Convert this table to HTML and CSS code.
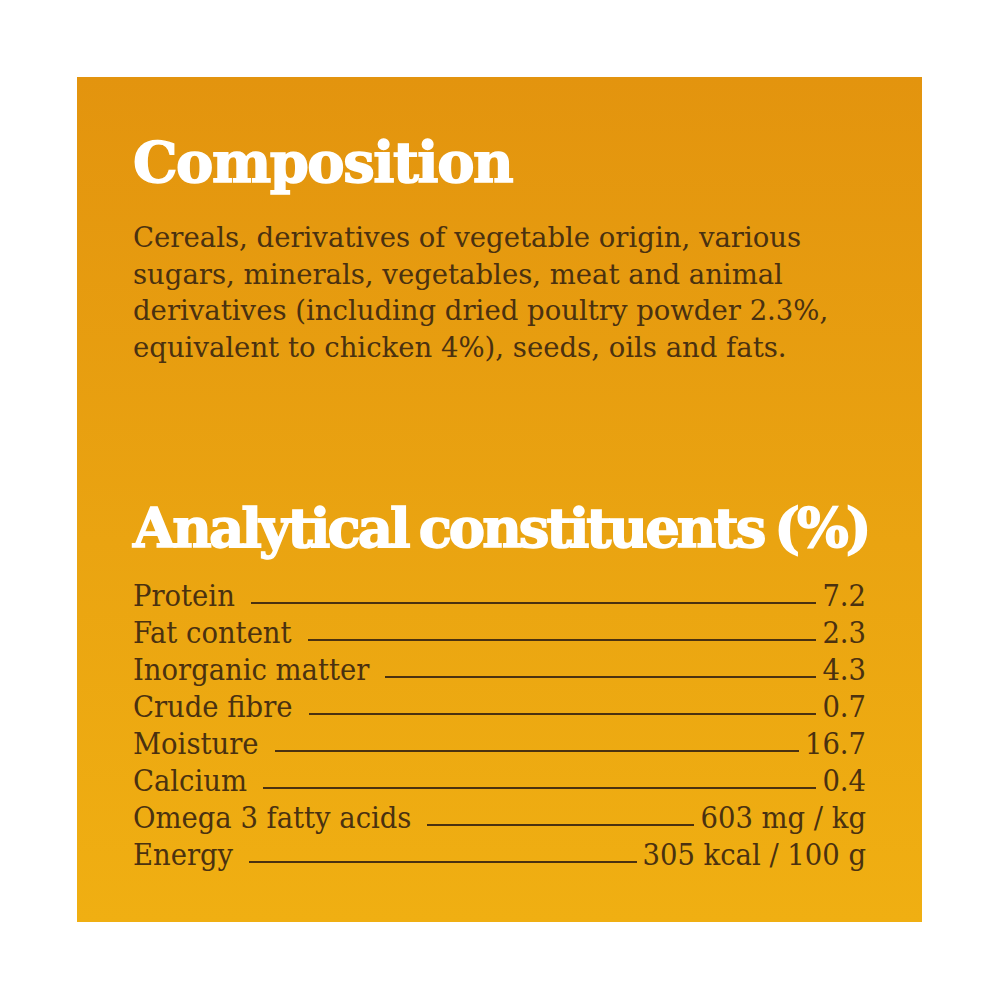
FILE: index.html
```html
<!DOCTYPE html>
<html>
<head>
<meta charset="utf-8">
<link rel="stylesheet" href="styles.css">
</head>
<body>
<div class="panel">
  <h1 class="title">Composition</h1>
  <p class="comp">Cereals, derivatives of vegetable origin, various sugars, minerals, vegetables, meat and animal derivatives (including dried poultry powder 2.3%, equivalent to chicken 4%), seeds, oils and fats.</p>
  <h2 class="title title2">Analytical constituents (%)</h2>
  <ul class="rows">
    <li class="row"><span class="lbl">Protein</span><span class="dots"></span><span class="val">7.2</span></li>
    <li class="row"><span class="lbl">Fat content</span><span class="dots"></span><span class="val">2.3</span></li>
    <li class="row"><span class="lbl">Inorganic matter</span><span class="dots"></span><span class="val">4.3</span></li>
    <li class="row"><span class="lbl">Crude fibre</span><span class="dots"></span><span class="val">0.7</span></li>
    <li class="row"><span class="lbl">Moisture</span><span class="dots"></span><span class="val">16.7</span></li>
    <li class="row"><span class="lbl">Calcium</span><span class="dots"></span><span class="val">0.4</span></li>
    <li class="row"><span class="lbl">Omega 3 fatty acids</span><span class="dots"></span><span class="val">603 mg / kg</span></li>
    <li class="row"><span class="lbl">Energy</span><span class="dots"></span><span class="val">305 kcal / 100 g</span></li>
  </ul>
</div>
</body>
</html>
```
FILE: styles.css
```css
html, body {
  margin: 0;
  padding: 0;
  background: #ffffff;
}
body {
  padding: 77px 0 0 77px;
}
.panel {
  box-sizing: border-box;
  width: 845px;
  height: 845px;
  padding: 50px 56px 0 56px;
  background: linear-gradient(180deg, #e3940e 0%, #eaa411 55%, #f0af12 100%);
  color: #4a3110;
  overflow: hidden;
}
.title {
  margin: 0;
  font-family: "DejaVu Serif", serif;
  font-weight: bold;
  font-size: 56px;
  line-height: 70px;
  letter-spacing: -1.5px;
  color: #ffffff;
  -webkit-text-stroke: 1.5px #ffffff;
  white-space: nowrap;
}
.comp {
  margin: 22px 0 0 0;
  font-family: "DejaVu Serif", serif;
  font-size: 27.5px;
  line-height: 36.7px;
  color: #4a3110;
  width: 712px;
}
.title2 {
  margin-top: 127px;
  font-size: 54.5px;
  letter-spacing: -3px;
  word-spacing: -5px;
}
.rows {
  list-style: none;
  margin: 14px 0 0 0;
  padding: 0;
  font-family: "DejaVu Serif Condensed", "DejaVu Serif", serif;
  font-size: 30.5px;
  line-height: 37.1px;
}
.row {
  display: flex;
  align-items: baseline;
}
.dots {
  flex: 1;
  border-bottom: 2px solid #4a3110;
  margin: 0 6px 0 16px;
  height: 0;
  position: relative;
  top: -2px;
}
.val {
  white-space: nowrap;
}
```
